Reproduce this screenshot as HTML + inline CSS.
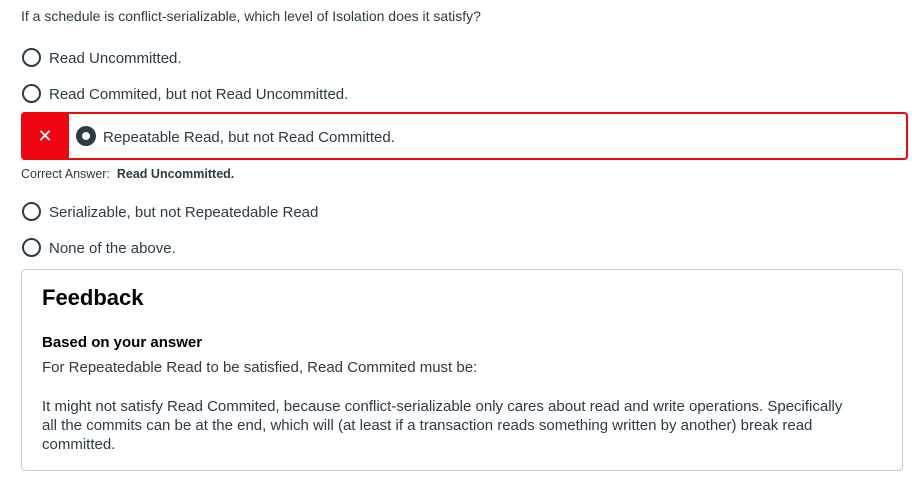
<!DOCTYPE html>
<html><head><style>
body{margin:0;width:922px;height:484px;background:#fff;font-family:"Liberation Sans",sans-serif;color:#2d3b45;position:relative;overflow:hidden}
.a{position:absolute;white-space:nowrap}
.t{font-size:15px}
.r{position:absolute;width:15px;height:15px;border:2px solid #2d3b45;border-radius:50%;box-sizing:content-box}
</style></head><body>
<div class="a" style="left:21px;top:8px;font-size:14px">If a schedule is conflict-serializable, which level of Isolation does it satisfy?</div>
<div class="r" style="left:22px;top:48px"></div><div class="a t" style="left:49px;top:50px">Read Uncommitted.</div>
<div class="r" style="left:22px;top:84px"></div><div class="a t" style="left:49px;top:86px">Read Commited, but not Read Uncommitted.</div>
<div class="a" style="left:21px;top:112px;width:883px;height:44px;border:2px solid #ee0612;border-radius:4px"></div>
<div class="a" style="left:21px;top:112px;width:48px;height:48px;background:#ee0612;border-radius:4px 0 0 4px;color:#fff;font-size:18px;text-align:center;line-height:48px">✕</div>
<div class="a" style="left:76px;top:126px;width:20px;height:20px;border-radius:50%;background:#2d3b45"></div>
<div class="a" style="left:82px;top:132px;width:8px;height:8px;border-radius:50%;background:#fff"></div>
<div class="a t" style="left:103px;top:129px">Repeatable Read, but not Read Committed.</div>
<div class="a" style="left:21px;top:167px;font-size:12.5px">Correct Answer: &nbsp;<b>Read Uncommitted.</b></div>
<div class="r" style="left:22px;top:202px"></div><div class="a t" style="left:49px;top:204px">Serializable, but not Repeatedable Read</div>
<div class="r" style="left:22px;top:238px"></div><div class="a t" style="left:49px;top:240px">None of the above.</div>
<div class="a" style="left:21px;top:269px;width:880px;height:200px;border:1px solid #c7cdd1;border-radius:4px"></div>
<div class="a" style="left:42px;top:285px;font-size:22px;color:#000;font-weight:bold">Feedback</div>
<div class="a" style="left:42px;top:334px;font-size:15px;font-weight:bold;color:#000">Based on your answer</div>
<div class="a t" style="left:42px;top:359px">For Repeatedable Read to be satisfied, Read Commited must be:</div>
<div class="a t" style="left:42px;top:397px;line-height:19px;white-space:normal;width:805px">It might not satisfy Read Commited, because conflict-serializable only cares about read and write operations. Specifically all the commits can be at the end, which will (at least if a transaction reads something written by another) break read committed.</div>
</body></html>
